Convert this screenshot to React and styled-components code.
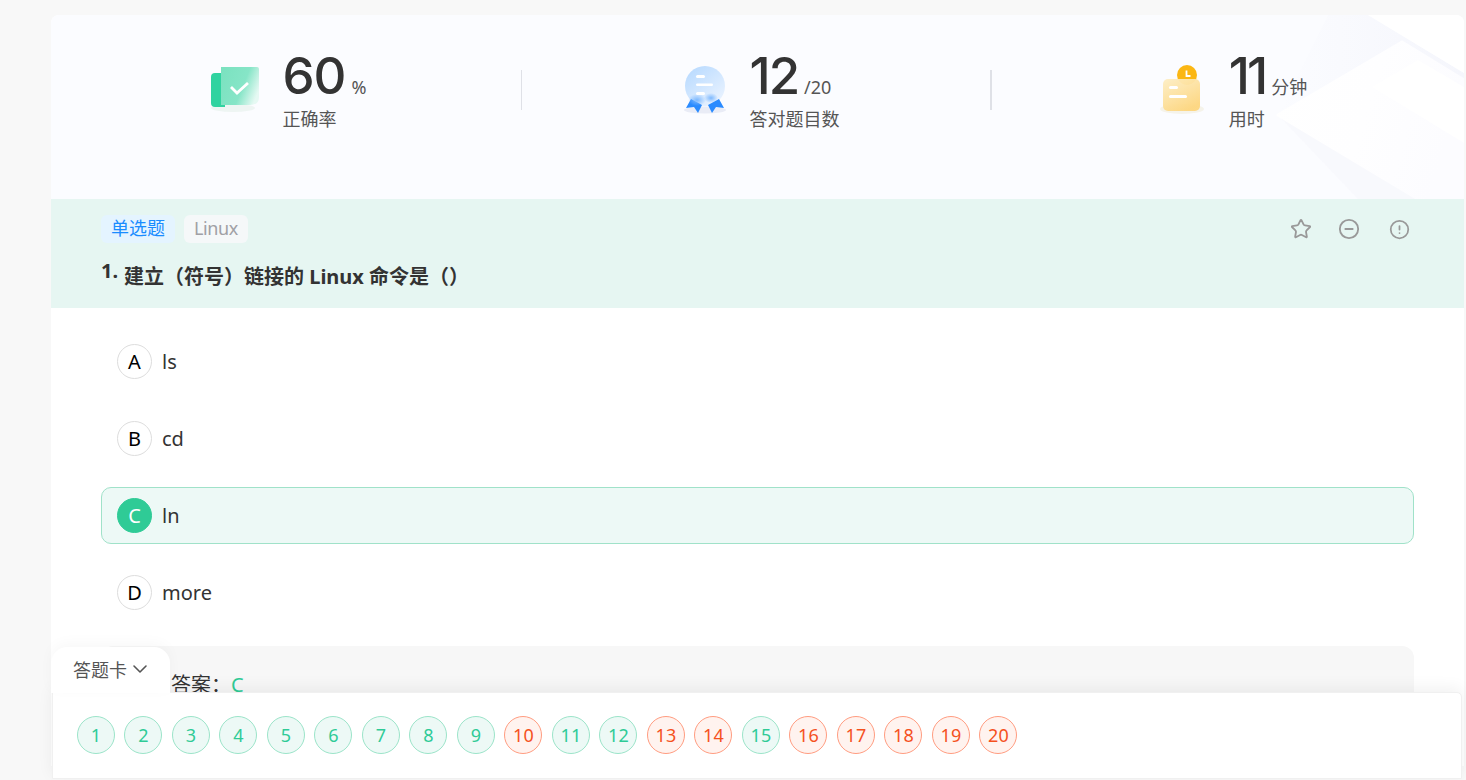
import React from 'react';
import styled, { createGlobalStyle } from 'styled-components';
import { Star, CircleMinus, CircleAlert, ChevronDown } from 'lucide-react';

const Global = createGlobalStyle`
  html, body { margin: 0; padding: 0; height: 100%; overflow: hidden; background: #f8f8f8; }
  body { font-family: "Noto Sans", "Noto Sans CJK SC", sans-serif; color: #333; }
  * { box-sizing: border-box; }
`;

const Page = styled.div`
  height: 780px;
  overflow: hidden;
  padding: 15px 2px 0 51px;
  position: relative;
`;
const Card = styled.main`
  background: #fff;
  border-radius: 8px 8px 0 0;
  overflow: hidden;
`;
const Summary = styled.section`
  position: relative;
  height: 184px;
  background: #fbfcff;
  display: grid;
  grid-template-columns: 471px 470px 1fr;
  padding-top: 55px;
  align-items: start;
`;
const Decor = styled.svg`
  position: absolute;
  right: 0;
  top: 0;
`;
const Stat = styled.div`
  position: relative;
  height: 40px;
  display: flex;
  justify-content: center;
  padding-right: ${p => (p.$last ? '0' : '3px')};
  border-right: ${p => (p.$last ? 'none' : `${p.$thin ? 1 : 2}px solid #dfe1e7`)};
`;
const StatInner = styled.div`
  position: relative;
  display: flex;
  gap: 14px;
  height: 80px;
`;
const StatIcon = styled.svg`
  width: 66px;
  height: 66px;
  flex: none;
  margin-top: -10px;
`;
const StatText = styled.div`
  display: flex;
  flex-direction: column;
  margin-top: -20px;
`;
const Value = styled.div`
  display: flex;
  align-items: baseline;
  gap: 6px;
  height: 52px;
  line-height: 52px;
`;
const Big = styled.span`
  font-family: Inter, sans-serif;
  font-size: 51px;
  font-weight: 500;
  letter-spacing: ${p => p.$spacing}px;
  color: #333;
`;
const Unit = styled.span`
  font-size: 18px;
  color: #555;
`;
const Label = styled.div`
  font-size: 18px;
  line-height: 26px;
  margin-top: 4px;
  color: #555;
`;
const QuestionHead = styled.section`
  height: 109px;
  background: #e6f6f2;
  padding: 16px 50px;
`;
const TagRow = styled.div`
  display: flex;
  align-items: center;
  gap: 9px;
  height: 28px;
`;
const Tag = styled.span`
  height: 28px;
  line-height: 27px;
  padding: 0 10px;
  border-radius: 6px;
  font-size: 18px;
  background: ${p => (p.$blue ? '#e4f4ff' : '#f5f8f9')};
  color: ${p => (p.$blue ? '#1a8cff' : '#a0a0a5')};
  ${p => (p.$blue ? '' : 'letter-spacing: -0.4px;')}
`;
const Actions = styled.div`
  margin-left: auto;
  display: flex;
  align-items: center;
  gap: 27px;
  color: #999;
  padding-right: 4.5px;
`;
const MinusIcon = styled(CircleMinus)`
  margin: 0 2px 0 -1px;
`;
const Title = styled.h2`
  margin: 20px 0 0;
  display: flex;
  font-size: 20px;
  font-weight: 700;
  line-height: 28px;
  color: #333;
`;
const Num = styled.span`
  width: 23px;
  flex: none;
  margin-top: -6px;
`;
const Options = styled.section`
  padding: 25px 50px 0;
  display: flex;
  flex-direction: column;
  gap: 20px;
`;
const Option = styled.div`
  height: 57px;
  display: flex;
  align-items: center;
  gap: 10px;
  padding: 0 15px;
  border: 1px solid ${p => (p.$on ? '#a0e2c9' : 'transparent')};
  border-radius: 10px;
  background: ${p => (p.$on ? '#edf9f6' : 'transparent')};
  font-size: 20px;
  color: #333;
`;
const Letter = styled.span`
  width: 35px;
  height: 35px;
  flex: none;
  border-radius: 50%;
  display: flex;
  align-items: center;
  justify-content: center;
  font-size: 20px;
  border: 1px solid ${p => (p.$on ? '#2fcb96' : '#ddd')};
  background: ${p => (p.$on ? '#2fcb96' : '#fff')};
  color: ${p => (p.$on ? '#fff' : '#000')};
`;
const Answer = styled.section`
  margin: 25px 50px 0;
  height: 120px;
  border-radius: 12px;
  background: #f7f7f7;
  padding: 25px 70px;
  font-size: 20px;
  line-height: 28px;
  color: #333;
  b { font-weight: 400; color: #2fcb96; }
`;
const Dock = styled.div`
  position: absolute;
  left: 52px;
  right: 4px;
  bottom: 1px;
`;
const DockTab = styled.button`
  position: absolute;
  left: -1px;
  top: -45px;
  width: 119px;
  height: 46px;
  border: none;
  border-radius: 16px 16px 0 0;
  background: #fff;
  box-shadow: 0 -4px 14px rgba(0, 0, 0, 0.03);
  font: inherit;
  font-size: 18px;
  color: #555;
  display: flex;
  align-items: center;
  justify-content: center;
  gap: 1px;
  padding: 0 0 2px 4px;
`;
const DockCard = styled.div`
  position: relative;
  height: 87px;
  background: #fff;
  border: 1px solid #f0f0f0;
  border-radius: 0 5px 0 0;
  box-shadow: 0 -4px 16px rgba(0, 0, 0, 0.06);
  display: flex;
  align-items: center;
  padding: 0 0 2px 23.9px;
  gap: 9.5px;
`;
const Ball = styled.span`
  width: 38px;
  height: 38px;
  flex: none;
  border-radius: 50%;
  display: flex;
  align-items: center;
  justify-content: center;
  font-size: 18px;
  border: 1px solid ${p => (p.$ok ? '#9be4c9' : '#ff9c80')};
  background: ${p => (p.$ok ? '#edf9f6' : '#fff3ef')};
  color: ${p => (p.$ok ? '#2fcb96' : '#f5511e')};
`;

const wrong = new Set([10, 13, 14, 16, 17, 18, 19, 20]);
const numbers = Array.from({ length: 20 }, (_, i) => i + 1);
const opts = [['A', 'ls'], ['B', 'cd'], ['C', 'ln', true], ['D', 'more']];

const CheckIcon = () => (
  <StatIcon viewBox="0 0 66 66">
    <defs>
      <linearGradient id="g1" x1="0" y1="0.2" x2="1" y2="0.6">
        <stop offset="0" stopColor="#7be2c0" />
        <stop offset="0.6" stopColor="#86e5c7" />
        <stop offset="1" stopColor="#e6f9f3" />
      </linearGradient>
    </defs>
    <ellipse cx="31" cy="48" rx="22" ry="4" fill="#eef5f3" />
    <path d="M13 13h10v34H13a4 4 0 0 1-4-4V17a4 4 0 0 1 4-4z" fill="#30d3a0" />
    <path d="M19 7h36a2 2 0 0 1 2 2v28q0 8-9 8H19z" fill="url(#g1)" />
    <path d="M29 27l6 6 11-10" fill="none" stroke="#fff" strokeWidth="2.8" />
  </StatIcon>
);
const MedalIcon = () => (
  <StatIcon viewBox="0 0 66 66">
    <defs>
      <linearGradient id="g2" x1="0" y1="0" x2="0.8" y2="1">
        <stop offset="0" stopColor="#b4d8ff" />
        <stop offset="1" stopColor="#eaf3ff" />
      </linearGradient>
      <radialGradient id="g3">
        <stop offset="0" stopColor="#7db9ff" />
        <stop offset="1" stopColor="#7db9ff" stopOpacity="0" />
      </radialGradient>
    </defs>
    <ellipse cx="35" cy="50" rx="21" ry="3.5" fill="#e9ecf6" />
    <circle cx="35" cy="26" r="20" fill="url(#g2)" />
    <path d="M21 39l-5 9 8-1 4 6 4-8z" fill="#2a8bff" />
    <path d="M49 39l5 9-8-1-4 6-4-8z" fill="#2a8bff" />
    <ellipse cx="27" cy="40" rx="9" ry="6" fill="url(#g3)" />
    <ellipse cx="41" cy="38" rx="7" ry="5" fill="url(#g3)" />
    <rect x="26" y="15" width="9" height="3" rx="1.5" fill="#fff" />
    <rect x="26" y="23.5" width="17" height="2.6" rx="1.3" fill="#fff" />
    <rect x="26" y="32" width="9" height="3" rx="1.5" fill="#fff" />
  </StatIcon>
);
const ClockIcon = () => (
  <StatIcon viewBox="0 0 66 66">
    <defs>
      <linearGradient id="g4" x1="0" y1="0" x2="0.6" y2="1">
        <stop offset="0" stopColor="#fdeec5" />
        <stop offset="1" stopColor="#fdd67f" />
      </linearGradient>
    </defs>
    <ellipse cx="33" cy="49" rx="22" ry="5" fill="#f5f3ea" />
    <circle cx="38" cy="15" r="10" fill="#fbb714" />
    <path d="M37.5 10.5v5.5h4" fill="none" stroke="#fff" strokeWidth="1.8" />
    <rect x="14" y="19" width="37" height="32" rx="5" fill="url(#g4)" opacity="0.95" />
    <rect x="20" y="26" width="9" height="3" rx="1.5" fill="#fff" />
    <rect x="20" y="35" width="18" height="3" rx="1.5" fill="#fff" />
  </StatIcon>
);

const stats = [
  { Icon: CheckIcon, value: '60', unit: '%', label: '正确率', thin: true, spacing: -1 },
  { Icon: MedalIcon, value: '12', unit: '/20', label: '答对题目数', spacing: -2 },
  { Icon: ClockIcon, value: '11', unit: '分钟', label: '用时', last: true, spacing: -3 },
];

export default function App() {
  return (
    <>
      <Global />
      <Page>
        <Card>
          <Summary>
            <Decor width="196" height="184" viewBox="0 0 196 184">
              <defs>
                <linearGradient id="d1" x1="0" y1="0" x2="1" y2="0.25">
                  <stop offset="0" stopColor="#ffffff" />
                  <stop offset="0.55" stopColor="#fefeff" />
                  <stop offset="1" stopColor="#fcfcff" />
                </linearGradient>
                <linearGradient id="d2" x1="0" y1="0" x2="1" y2="0">
                  <stop offset="0" stopColor="#f5f6fc" stopOpacity="0" />
                  <stop offset="1" stopColor="#f5f6fc" />
                </linearGradient>
              </defs>
              <path d="M60 0H100L196 58V65L134 27 10 100z" fill="url(#d2)" />
              <path d="M10 100L90 184H150z" fill="#f7f8fd" opacity="0.8" />
              <path d="M100 0H196V58z" fill="#fff" />
              <path d="M10 100L134 27 196 65V184H150z" fill="url(#d1)" stroke="url(#d1)" strokeWidth="3" strokeLinejoin="round" />
              <path d="M104 72L150 45 196 72V128z" fill="#fff" opacity="0.85" />
            </Decor>
            {stats.map(({ Icon, value, unit, label, last, thin, spacing }) => (
              <Stat key={label} $last={last} $thin={thin}>
                <StatInner>
                  <Icon />
                  <StatText>
                    <Value>
                      <Big $spacing={spacing}>{value}</Big>
                      <Unit>{unit}</Unit>
                    </Value>
                    <Label>{label}</Label>
                  </StatText>
                </StatInner>
              </Stat>
            ))}
          </Summary>
          <QuestionHead>
            <TagRow>
              <Tag $blue>单选题</Tag>
              <Tag>Linux</Tag>
              <Actions>
                <Star size={22} strokeWidth={2} />
                <MinusIcon size={22} strokeWidth={2} />
                <CircleAlert size={21} strokeWidth={2} />
              </Actions>
            </TagRow>
            <Title>
              <Num>1.</Num>
              <span>建立（符号）链接的 Linux 命令是（）</span>
            </Title>
          </QuestionHead>
          <Options>
            {opts.map(([k, t, on]) => (
              <Option key={k} $on={on}>
                <Letter $on={on}>{k}</Letter>
                {t}
              </Option>
            ))}
          </Options>
          <Answer>答案：<b>C</b></Answer>
        </Card>
        <Dock>
          <DockCard>
            {numbers.map(n => (
              <Ball key={n} $ok={!wrong.has(n)}>{n}</Ball>
            ))}
          </DockCard>
          <DockTab>
            答题卡<ChevronDown size={24} strokeWidth={1.6} />
          </DockTab>
        </Dock>
      </Page>
    </>
  );
}
